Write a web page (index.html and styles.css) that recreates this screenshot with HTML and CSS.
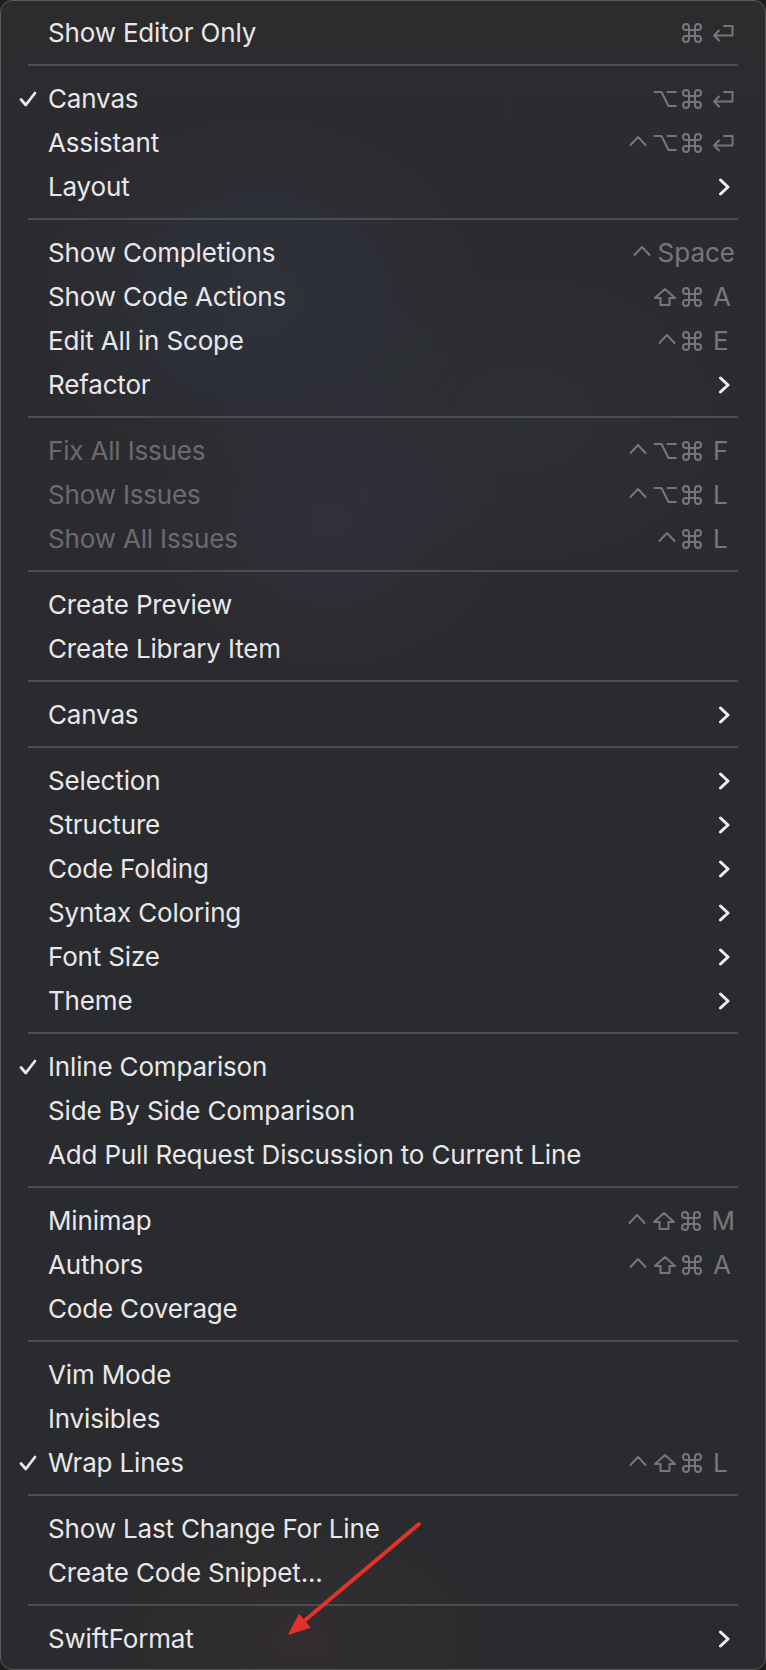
FILE: index.html
```html
<!DOCTYPE html>
<html lang="en">
<head>
<meta charset="utf-8">
<title>Editor Menu</title>
<link rel="stylesheet" href="styles.css">
</head>
<body>
<svg class="defs" aria-hidden="true">
  <symbol id="g-ctrl" viewBox="0 0 20 20"><path d="M2.5 12 L10 4 L17.5 12"/></symbol>
  <symbol id="g-opt" viewBox="0 0 24 20"><path d="M1.5 3 H8.5 L15.5 17 H23 M14.5 3 H23"/></symbol>
  <symbol id="g-cmd" viewBox="2 2 20 20"><path d="M15 6v12a3 3 0 1 0 3-3H6a3 3 0 1 0 3 3V6a3 3 0 1 0-3 3h12a3 3 0 1 0-3-3"/></symbol>
  <symbol id="g-shift" viewBox="0 0 24 20"><path d="M12 2 L22 11 H16.5 V18 H7.5 V11 H2 Z"/></symbol>
  <symbol id="g-ret" viewBox="0 0 24 20"><path d="M13 3 H21.5 V12.5 H3 M8 7.5 L3 12.5 L8 17.5"/></symbol>
  <symbol id="g-check" viewBox="0 0 18 16"><path d="M2 8.5 L6.8 14 L16 2"/></symbol>
  <symbol id="g-sub" viewBox="0 0 12 18"><path d="M2.5 2 L10 9 L2.5 16"/></symbol>
</svg>

<div class="menu">
  <div class="item"><span class="label">Show Editor Only</span>
    <span class="keys"><svg class="mod w20"><use href="#g-cmd"/></svg><svg class="key-ret"><use href="#g-ret"/></svg></span></div>
  <div class="sep"></div>

  <div class="item"><svg class="check"><use href="#g-check"/></svg><span class="label">Canvas</span>
    <span class="keys"><svg class="mod w24"><use href="#g-opt"/></svg><svg class="mod w20"><use href="#g-cmd"/></svg><svg class="key-ret"><use href="#g-ret"/></svg></span></div>
  <div class="item"><span class="label">Assistant</span>
    <span class="keys"><svg class="mod w20"><use href="#g-ctrl"/></svg><svg class="mod w24"><use href="#g-opt"/></svg><svg class="mod w20"><use href="#g-cmd"/></svg><svg class="key-ret"><use href="#g-ret"/></svg></span></div>
  <div class="item"><span class="label">Layout</span><svg class="sub"><use href="#g-sub"/></svg></div>
  <div class="sep"></div>

  <div class="item"><span class="label">Show Completions</span>
    <span class="keys"><svg class="mod w20"><use href="#g-ctrl"/></svg><span class="key key-word">Space</span></span></div>
  <div class="item"><span class="label">Show Code Actions</span>
    <span class="keys"><svg class="mod w24"><use href="#g-shift"/></svg><svg class="mod w20"><use href="#g-cmd"/></svg><span class="key">A</span></span></div>
  <div class="item"><span class="label">Edit All in Scope</span>
    <span class="keys"><svg class="mod w20"><use href="#g-ctrl"/></svg><svg class="mod w20"><use href="#g-cmd"/></svg><span class="key">E</span></span></div>
  <div class="item"><span class="label">Refactor</span><svg class="sub"><use href="#g-sub"/></svg></div>
  <div class="sep"></div>

  <div class="item disabled"><span class="label">Fix All Issues</span>
    <span class="keys"><svg class="mod w20"><use href="#g-ctrl"/></svg><svg class="mod w24"><use href="#g-opt"/></svg><svg class="mod w20"><use href="#g-cmd"/></svg><span class="key">F</span></span></div>
  <div class="item disabled"><span class="label">Show Issues</span>
    <span class="keys"><svg class="mod w20"><use href="#g-ctrl"/></svg><svg class="mod w24"><use href="#g-opt"/></svg><svg class="mod w20"><use href="#g-cmd"/></svg><span class="key">L</span></span></div>
  <div class="item disabled"><span class="label">Show All Issues</span>
    <span class="keys"><svg class="mod w20"><use href="#g-ctrl"/></svg><svg class="mod w20"><use href="#g-cmd"/></svg><span class="key">L</span></span></div>
  <div class="sep"></div>

  <div class="item"><span class="label">Create Preview</span></div>
  <div class="item"><span class="label">Create Library Item</span></div>
  <div class="sep"></div>

  <div class="item"><span class="label">Canvas</span><svg class="sub"><use href="#g-sub"/></svg></div>
  <div class="sep"></div>

  <div class="item"><span class="label">Selection</span><svg class="sub"><use href="#g-sub"/></svg></div>
  <div class="item"><span class="label">Structure</span><svg class="sub"><use href="#g-sub"/></svg></div>
  <div class="item"><span class="label">Code Folding</span><svg class="sub"><use href="#g-sub"/></svg></div>
  <div class="item"><span class="label">Syntax Coloring</span><svg class="sub"><use href="#g-sub"/></svg></div>
  <div class="item"><span class="label">Font Size</span><svg class="sub"><use href="#g-sub"/></svg></div>
  <div class="item"><span class="label">Theme</span><svg class="sub"><use href="#g-sub"/></svg></div>
  <div class="sep"></div>

  <div class="item"><svg class="check"><use href="#g-check"/></svg><span class="label">Inline Comparison</span></div>
  <div class="item"><span class="label">Side By Side Comparison</span></div>
  <div class="item"><span class="label">Add Pull Request Discussion to Current Line</span></div>
  <div class="sep"></div>

  <div class="item"><span class="label">Minimap</span>
    <span class="keys"><svg class="mod w20"><use href="#g-ctrl"/></svg><svg class="mod w24"><use href="#g-shift"/></svg><svg class="mod w20"><use href="#g-cmd"/></svg><span class="key">M</span></span></div>
  <div class="item"><span class="label">Authors</span>
    <span class="keys"><svg class="mod w20"><use href="#g-ctrl"/></svg><svg class="mod w24"><use href="#g-shift"/></svg><svg class="mod w20"><use href="#g-cmd"/></svg><span class="key">A</span></span></div>
  <div class="item"><span class="label">Code Coverage</span></div>
  <div class="sep"></div>

  <div class="item"><span class="label">Vim Mode</span></div>
  <div class="item"><span class="label">Invisibles</span></div>
  <div class="item"><svg class="check"><use href="#g-check"/></svg><span class="label">Wrap Lines</span>
    <span class="keys"><svg class="mod w20"><use href="#g-ctrl"/></svg><svg class="mod w24"><use href="#g-shift"/></svg><svg class="mod w20"><use href="#g-cmd"/></svg><span class="key">L</span></span></div>
  <div class="sep"></div>

  <div class="item"><span class="label">Show Last Change For Line</span></div>
  <div class="item"><span class="label">Create Code Snippet...</span></div>
  <div class="sep"></div>

  <div class="item"><span class="label">SwiftFormat</span><svg class="sub"><use href="#g-sub"/></svg></div>

  <!-- callout arrow pointing at the SwiftFormat entry -->
  <svg class="callout" viewBox="0 0 150 125" width="150" height="125">
    <line x1="138" y1="8" x2="22" y2="106"/>
    <polygon points="8,118 28.5,111.2 18.1,99"/>
  </svg>
</div>
</body>
</html>
```

FILE: styles.css
```css
html, body {
  margin: 0;
  padding: 0;
}

body {
  background: #1d1d1f;
  width: 766px;
  height: 1670px;
  font-family: "Inter", "Noto Sans", "Liberation Sans", sans-serif;
}

.defs {
  position: absolute;
  width: 0;
  height: 0;
  overflow: hidden;
}

.menu {
  position: relative;
  box-sizing: border-box;
  width: 766px;
  height: 1670px;
  padding: 10px 0 8px;
  border: 1px solid #5b5b5e;
  border-radius: 12px;
  background:
    radial-gradient(ellipse 260px 220px at 330px 520px, rgba(72, 58, 92, 0.26), transparent 70%),
    radial-gradient(ellipse 320px 260px at 260px 300px, rgba(55, 68, 98, 0.26), transparent 70%),
    radial-gradient(ellipse 300px 220px at 520px 420px, rgba(60, 70, 92, 0.16), transparent 70%),
    radial-gradient(ellipse 300px 200px at 300px 1640px, rgba(82, 55, 55, 0.18), transparent 70%),
    linear-gradient(180deg, #2c2c2f 0%, #2b2b2f 40%, #2a2b2e 100%);
  color: #e8e8ea;
  overflow: hidden;
}

.item {
  position: relative;
  display: flex;
  align-items: center;
  height: 44px;
  padding: 0 30px 0 47px;
  font-size: 26px;
  line-height: 44px;
  white-space: nowrap;
}

.item.disabled .label {
  color: #6b6b6f;
}

.label {
  flex: 1;
  letter-spacing: -0.17px;
}

.check {
  position: absolute;
  left: 18px;
  top: 14px;
  width: 18px;
  height: 16px;
  fill: none;
  stroke: #e8e8ea;
  stroke-width: 2.8;
  stroke-linecap: round;
  stroke-linejoin: round;
}

.sub {
  width: 12px;
  height: 18px;
  margin-right: 5px;
  fill: none;
  stroke: #f0f0f2;
  stroke-width: 3;
  stroke-linecap: round;
  stroke-linejoin: round;
}

.keys {
  display: flex;
  align-items: center;
  gap: 5px;
  color: #77777b;
}

.mod, .key-ret {
  height: 20px;
  fill: none;
  stroke: currentColor;
  stroke-width: 2;
  stroke-linecap: round;
  stroke-linejoin: round;
}

.mod.w20 { width: 20px; }
.mod.w24 { width: 24px; }

.key-ret {
  width: 24px;
  margin-left: 4px;
}

.key {
  min-width: 22px;
  margin-left: 4px;
  padding-left: 2px;
  font-size: 26px;
}

.key-word {
  min-width: 0;
  margin-left: 1px;
  padding-left: 0;
}

.sep {
  height: 2px;
  margin: 9px 27px 11px;
  background: #4d4d51;
}

.callout {
  position: absolute;
  left: 280px;
  top: 1515px;
  overflow: visible;
}

.callout line {
  stroke: #e2322b;
  stroke-width: 4;
  stroke-linecap: round;
}

.callout polygon {
  fill: #e2322b;
  stroke: #e2322b;
  stroke-width: 1.5;
  stroke-linejoin: round;
}
```
